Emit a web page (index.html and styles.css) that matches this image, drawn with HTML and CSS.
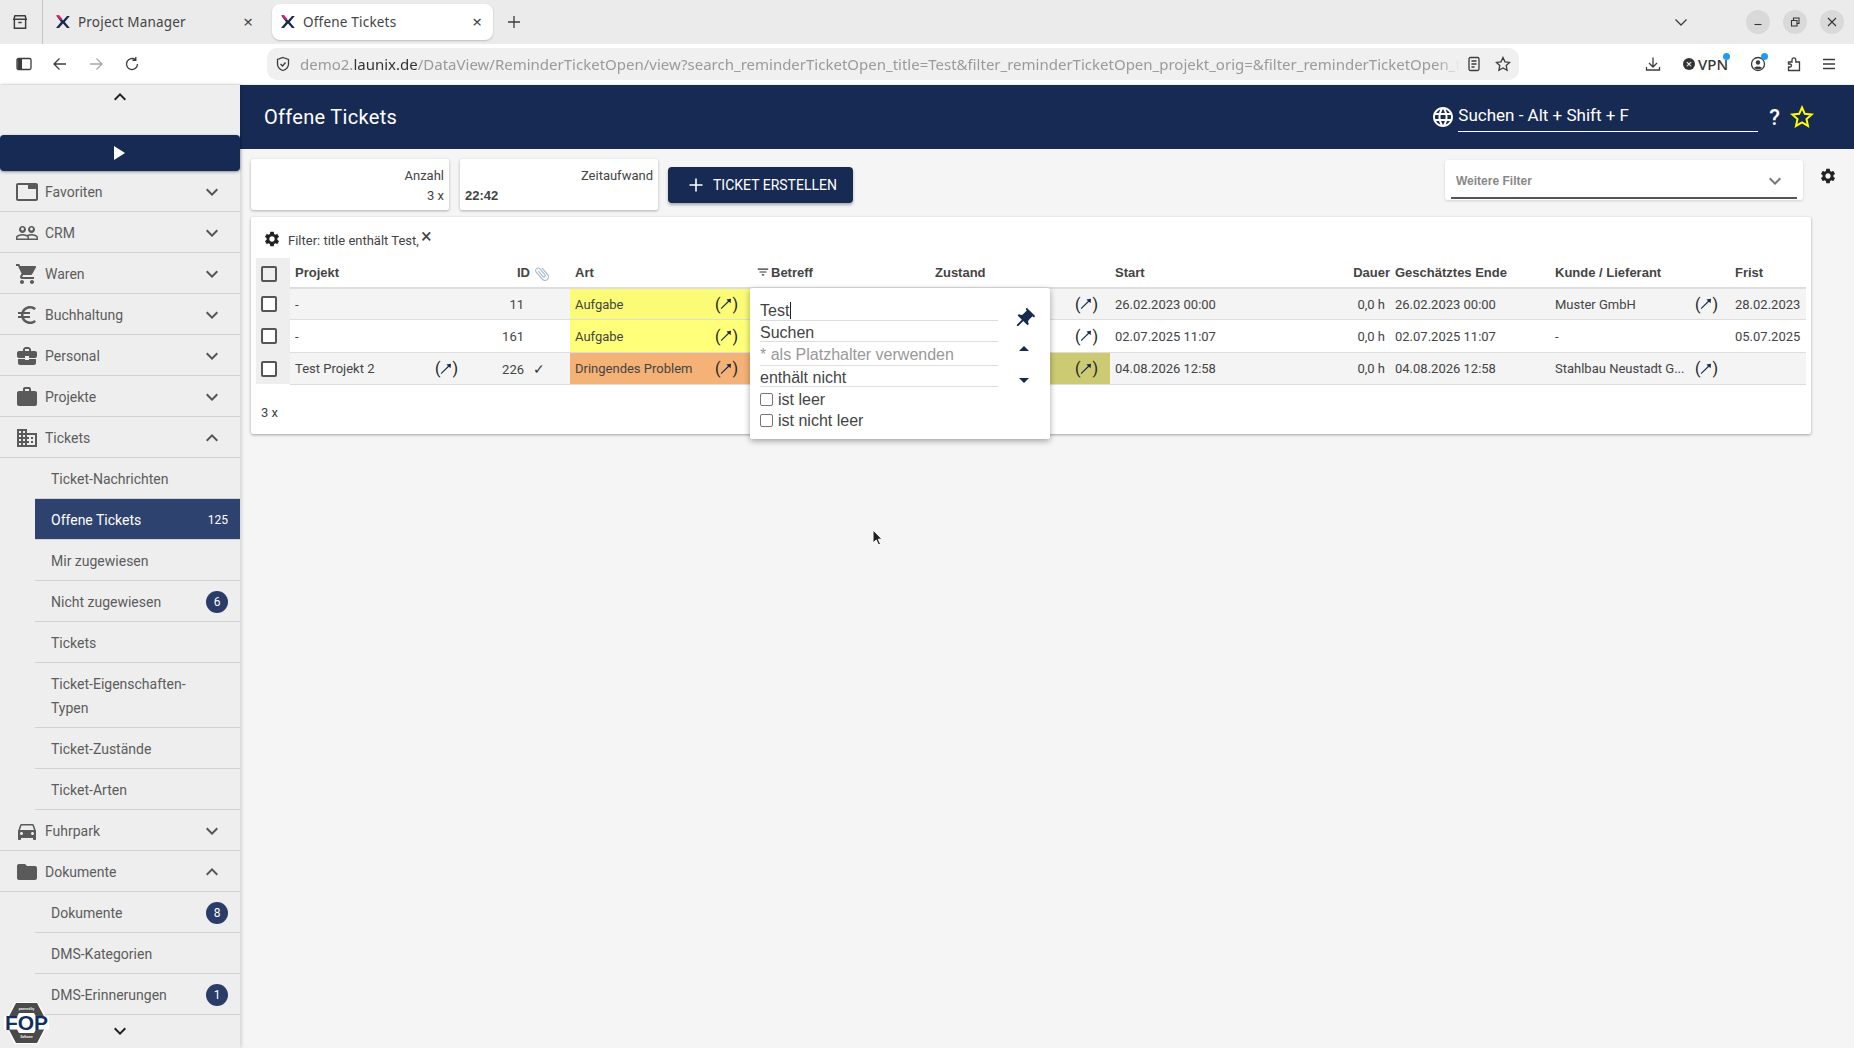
FILE: index.html
```html
<!DOCTYPE html>
<html lang="de">
  <head>
    <meta charset="UTF-8" />
    <title>Offene Tickets</title>
    <link rel="stylesheet" href="styles.css">
  </head>
  <body>
    <svg class="sprite" xmlns="http://www.w3.org/2000/svg">
      <symbol id="i-down" viewBox="0 0 24 24"><path d="M16.59 8.59L12 13.17 7.41 8.59 6 10l6 6 6-6z"/></symbol>
      <symbol id="i-up" viewBox="0 0 24 24"><path d="M12 8l-6 6 1.41 1.41L12 10.83l4.59 4.58L18 14z"/></symbol>
      <symbol id="i-tab" viewBox="0 0 24 24"><path d="M21 3H3c-1.1 0-2 .9-2 2v14c0 1.1.9 2 2 2h18c1.1 0 2-.9 2-2V5c0-1.1-.9-2-2-2zm0 16H3V5h10v4h8v10z"/></symbol>
      <symbol id="i-people" viewBox="0 0 24 24"><path d="M16.5 13c-1.2 0-3.07.34-4.5 1-1.43-.67-3.3-1-4.5-1C5.33 13 1 14.08 1 16.25V19h22v-2.75c0-2.17-4.33-3.25-6.5-3.25zm-4 4.5h-10v-1.25c0-.54 2.56-1.75 5-1.75s5 1.21 5 1.75v1.25zm9 0H14v-1.25c0-.46-.2-.86-.52-1.22.88-.3 1.96-.53 3.02-.53 2.44 0 5 1.21 5 1.75v1.25zM7.5 12c1.93 0 3.5-1.57 3.5-3.5S9.43 5 7.5 5 4 6.57 4 8.5 5.57 12 7.5 12zm0-5.5c.83 0 1.5.67 1.5 1.5s-.67 1.5-1.5 1.5S6 8.83 6 8s.67-1.5 1.5-1.5zm9 5.5c1.93 0 3.5-1.57 3.5-3.5S18.43 5 16.5 5 13 6.57 13 8.5s1.57 3.5 3.5 3.5zm0-5.5c.83 0 1.5.67 1.5 1.5s-.67 1.5-1.5 1.5S15 8.83 15 8s.67-1.5 1.5-1.5z"/></symbol>
      <symbol id="i-cart" viewBox="0 0 24 24"><path d="M7 18c-1.1 0-1.99.9-1.99 2S5.9 22 7 22s2-.9 2-2-.9-2-2-2zM1 2v2h2l3.6 7.59-1.35 2.45c-.16.28-.25.61-.25.96 0 1.1.9 2 2 2h12v-2H7.42c-.14 0-.25-.11-.25-.25l.03-.12.9-1.63h7.45c.75 0 1.41-.41 1.75-1.03l3.58-6.49c.08-.14.12-.31.12-.48 0-.55-.45-1-1-1H5.21l-.94-2H1zm16 16c-1.1 0-1.99.9-1.99 2s.89 2 1.99 2 2-.9 2-2-.9-2-2-2z"/></symbol>
      <symbol id="i-euro" viewBox="0 0 24 24"><path d="M15 18.5c-2.51 0-4.68-1.42-5.76-3.5H15v-2H8.58c-.05-.33-.08-.66-.08-1s.03-.67.08-1H15V9H9.24C10.32 6.92 12.5 5.5 15 5.5c1.61 0 3.09.59 4.23 1.57L21 5.3C19.41 3.87 17.3 3 15 3c-3.92 0-7.24 2.51-8.48 6H3v2h3.06c-.04.33-.06.66-.06 1s.02.67.06 1H3v2h3.52c1.24 3.49 4.56 6 8.48 6 2.31 0 4.41-.87 6-2.3l-1.78-1.77c-1.13.98-2.6 1.57-4.22 1.57z"/></symbol>
      <symbol id="i-center" viewBox="0 0 24 24"><path d="M10 16v-1H3.01L3 19c0 1.11.89 2 2 2h14c1.11 0 2-.89 2-2v-4h-7v1h-4zm10-9h-4.01V5l-2-2h-4l-2 2v2H4c-1.1 0-2 .9-2 2v3c0 1.11.89 2 2 2h6v-2h4v2h6c1.1 0 2-.9 2-2V9c0-1.1-.9-2-2-2zm-6 0h-4V5h4v2z"/></symbol>
      <symbol id="i-work" viewBox="0 0 24 24"><path d="M20 6h-4V4c0-1.11-.89-2-2-2h-4c-1.11 0-2 .89-2 2v2H4c-1.11 0-1.99.89-1.99 2L2 19c0 1.11.89 2 2 2h16c1.11 0 2-.89 2-2V8c0-1.11-.89-2-2-2zm-6 0h-4V4h4v2z"/></symbol>
      <symbol id="i-domain" viewBox="0 0 24 24"><path d="M12 7V3H2v18h20V7H12zM6 19H4v-2h2v2zm0-4H4v-2h2v2zm0-4H4V9h2v2zm0-4H4V5h2v2zm4 12H8v-2h2v2zm0-4H8v-2h2v2zm0-4H8V9h2v2zm0-4H8V5h2v2zm10 12h-8v-2h2v-2h-2v-2h2v-2h-2V9h8v10zm-2-8h-2v2h2v-2zm0 4h-2v2h2v-2z"/></symbol>
      <symbol id="i-car" viewBox="0 0 24 24"><path d="M18.92 6.01C18.72 5.42 18.16 5 17.5 5h-11c-.66 0-1.21.42-1.42 1.01L3 12v8c0 .55.45 1 1 1h1c.55 0 1-.45 1-1v-1h12v1c0 .55.45 1 1 1h1c.55 0 1-.45 1-1v-8l-2.08-5.99zM6.5 16c-.83 0-1.5-.67-1.5-1.5S5.67 13 6.5 13s1.5.67 1.5 1.5S7.33 16 6.5 16zm11 0c-.83 0-1.5-.67-1.5-1.5s.67-1.5 1.5-1.5 1.5.67 1.5 1.5-.67 1.5-1.5 1.5zM5 11l1.5-4.5h11L19 11H5z"/></symbol>
      <symbol id="i-folder" viewBox="0 0 24 24"><path d="M10 4H4c-1.1 0-1.99.9-1.99 2L2 18c0 1.1.9 2 2 2h16c1.1 0 2-.9 2-2V8c0-1.1-.9-2-2-2h-8l-2-2z"/></symbol>
      <symbol id="i-gear" viewBox="0 0 24 24"><path d="M19.14 12.94c.04-.3.06-.61.06-.94 0-.32-.02-.64-.07-.94l2.03-1.58c.18-.14.23-.41.12-.61l-1.92-3.32c-.12-.22-.37-.29-.59-.22l-2.39.96c-.5-.38-1.03-.7-1.62-.94l-.36-2.54c-.04-.24-.24-.41-.48-.41h-3.84c-.24 0-.43.17-.47.41l-.36 2.54c-.59.24-1.13.57-1.62.94l-2.39-.96c-.22-.08-.47 0-.59.22L2.74 8.87c-.12.21-.08.47.12.61l2.03 1.58c-.05.3-.09.63-.09.94s.02.64.07.94l-2.03 1.58c-.18.14-.23.41-.12.61l1.92 3.32c.12.22.37.29.59.22l2.39-.96c.5.38 1.03.7 1.62.94l.36 2.54c.05.24.24.41.48.41h3.84c.24 0 .44-.17.47-.41l.36-2.54c.59-.24 1.13-.56 1.62-.94l2.39.96c.22.08.47 0 .59-.22l1.92-3.32c.12-.22.07-.47-.12-.61l-2.01-1.58zM12 15.6c-1.98 0-3.6-1.62-3.6-3.6s1.62-3.6 3.6-3.6 3.6 1.62 3.6 3.6-1.62 3.6-3.6 3.6z"/></symbol>
      <symbol id="i-globe" viewBox="0 0 24 24"><path d="M11.99 2C6.47 2 2 6.48 2 12s4.47 10 9.99 10C17.52 22 22 17.52 22 12S17.52 2 11.99 2zm6.93 6h-2.95c-.32-1.25-.78-2.45-1.38-3.56 1.84.63 3.37 1.91 4.33 3.56zM12 4.04c.83 1.2 1.48 2.53 1.91 3.96h-3.82c.43-1.43 1.08-2.76 1.91-3.96zM4.26 14C4.1 13.36 4 12.69 4 12s.1-1.36.26-2h3.38c-.08.66-.14 1.32-.14 2 0 .68.06 1.34.14 2H4.26zm.82 2h2.95c.32 1.25.78 2.45 1.38 3.56-1.84-.63-3.37-1.9-4.33-3.56zm2.95-8H5.08c.96-1.66 2.49-2.93 4.33-3.56C8.81 5.55 8.35 6.75 8.03 8zM12 19.96c-.83-1.2-1.48-2.53-1.91-3.96h3.82c-.43 1.43-1.08 2.76-1.91 3.96zM14.34 14H9.66c-.09-.66-.16-1.32-.16-2 0-.68.07-1.35.16-2h4.68c.09.65.16 1.32.16 2 0 .68-.07 1.34-.16 2zm.25 5.56c.6-1.11 1.06-2.31 1.38-3.56h2.95c-.96 1.65-2.49 2.93-4.33 3.56zM16.36 14c.08-.66.14-1.32.14-2 0-.68-.06-1.34-.14-2h3.38c.16.64.26 1.31.26 2s-.1 1.36-.26 2h-3.38z"/></symbol>
      <symbol id="i-pin" viewBox="0 0 24 24"><path transform="rotate(45 12 12)" d="M16 9V4h1c.55 0 1-.45 1-1s-.45-1-1-1H7c-.55 0-1 .45-1 1s.45 1 1 1h1v5c0 1.66-1.34 3-3 3v2h5.97v7l1 1 1-1v-7H19v-2c-1.66 0-3-1.34-3-3z"/></symbol>
      <symbol id="i-clip" viewBox="0 0 24 24"><path transform="rotate(-40 12 12)" d="M16.5 6v11.5c0 2.21-1.79 4-4 4s-4-1.79-4-4V5c0-1.38 1.12-2.5 2.5-2.5s2.5 1.12 2.5 2.5v10.5c0 .55-.45 1-1 1s-1-.45-1-1V6H10v9.5c0 1.38 1.12 2.5 2.5 2.5s2.5-1.12 2.5-2.5V5c0-2.21-1.79-4-4-4S7 2.79 7 5v12.5c0 3.04 2.46 5.5 5.5 5.5s5.5-2.46 5.5-5.5V6h-1.5z"/></symbol>
      <symbol id="i-filter" viewBox="0 0 24 24"><path d="M10 18h4v-2h-4v2zM3 6v2h18V6H3zm3 7h12v-2H6v2z"/></symbol>
      <symbol id="i-arrow" viewBox="0 0 12 12"><path d="M1.400 11l-.7-.7 7.300-7.300-1.600-1.600L11 .7l-.4 4.600-1.600-1.600z"/></symbol>
      <symbol id="i-fav" viewBox="0 0 16 16"><path fill="#16294f" d="M1 14L6 8 1.500 2h2.800L8 6.500 12 2h2.800L9.800 8l5 6H12L8 9.500 4 14z"/><path fill="#e0246f" d="M1 1h3l3.500 4-1.500 1.500z"/></symbol>
    </svg>

    <div class="tabbar">
      <div class="tab-list-btn">
        <svg class="b-icon" viewBox="0 0 16 16"><path d="M2 5.500h12M3 5.500v8h10v-8M3.500 2.500h9l1 3h-11zM6.500 8.500h3"/></svg>
      </div>
      <div class="tab">
        <svg class="favicon"><use href="#i-fav"/></svg>
        <span class="tab-title">Project Manager</span>
        <span class="tab-close">×</span>
      </div>
      <div class="tab tab-active">
        <svg class="favicon"><use href="#i-fav"/></svg>
        <span class="tab-title">Offene Tickets</span>
        <span class="tab-close">×</span>
      </div>
      <svg class="b-icon tab-new" viewBox="0 0 16 16"><path d="M8 2v12M2 8h12"/></svg>
      <svg class="b-icon tab-more" viewBox="0 0 16 16"><path d="M2.500 5.500L8 11l5.500-5.500"/></svg>
      <div class="win-btn"><svg viewBox="0 0 12 12"><path d="M2.500 8.500h7"/></svg></div>
      <div class="win-btn"><svg viewBox="0 0 12 12"><path d="M2.500 4.500h5.500v5.500h-5.500zM4.500 4.500v-2.500h5.500v5.500h-2"/></svg></div>
      <div class="win-btn win-last"><svg viewBox="0 0 12 12"><path d="M2 2l8 8M10 2l-8 8"/></svg></div>
    </div>

    <div class="toolbar">
      <svg class="b-icon" viewBox="0 0 16 16"><rect x="1" y="2.500" width="14" height="11" rx="1.500"/><rect class="fill" x="1.500" y="3" width="4.500" height="10"/></svg>
      <svg class="b-icon" viewBox="0 0 16 16"><path d="M14 8H2M7.500 2.500L2 8l5.500 5.500"/></svg>
      <svg class="b-icon off" viewBox="0 0 16 16"><path d="M2 8h12M8.500 2.500L14 8l-5.500 5.500"/></svg>
      <svg class="b-icon" viewBox="0 0 16 16"><path d="M13.500 8A5.500 5.500 0 1 1 11.500 3.800M11.800 1v3.300h-3.300"/></svg>
      <div class="urlbar">
        <svg class="b-icon url-shield" viewBox="0 0 16 16"><path d="M8 1.500l5.500 2v4.500c0 3.500-2.500 5.500-5.500 6.500-3-1-5.500-3-5.500-6.500V3.500zM5.500 8l2 2 3-3.500"/></svg>
        <div class="url-text">demo2.<b>launix.de</b>/DataView/ReminderTicketOpen/view?search_reminderTicketOpen_title=Test&amp;filter_reminderTicketOpen_projekt_orig=&amp;filter_reminderTicketOpen_t</div>
        <svg class="b-icon" viewBox="0 0 16 16"><rect x="3" y="1.500" width="10" height="13" rx="1.500"/><path d="M5.500 5h5M5.500 8h5M5.500 11h3"/></svg>
        <svg class="b-icon url-star" viewBox="0 0 16 16"><path d="M8 1.500l2 4.300 4.600.6-3.400 3.200.9 4.700L8 11.900l-4.100 2.400.9-4.700-3.400-3.200 4.600-.6z"/></svg>
      </div>
      <svg class="b-icon tb-down" viewBox="0 0 16 16"><path d="M8 1.500v9M4 7l4 4 4-4M1.500 11v3h13v-3"/></svg>
      <div class="vpn"><span class="vpn-dot">×</span>VPN<i class="blue-dot"></i></div>
      <div class="tb-account">
        <svg class="b-icon" viewBox="0 0 16 16"><circle cx="8" cy="8" r="6.500"/><circle class="fill" cx="8" cy="6.500" r="2.200"/><path class="fill" d="M4 12c1-2 7-2 8 0-2 1.800-6 1.800-8 0z"/></svg>
        <i class="blue-dot"></i>
      </div>
      <svg class="b-icon tb-ext" viewBox="0 0 16 16"><path d="M2.500 6h3.500V3.800a1.900 1.900 0 0 1 3.800 0V6h3.700v8.500h-11V11h1.500a1.500 1.500 0 0 0 0-3H2.500z"/></svg>
      <svg class="b-icon tb-menu" viewBox="0 0 16 16"><path d="M2 3.500h12M2 8h12M2 12.500h12"/></svg>
    </div>

    <div class="app">
      <aside class="sidebar">
        <div class="scroll-up"><svg class="ic-24"><use href="#i-up"/></svg></div>
        <div class="toggle"><span class="play"></span></div>
        <nav class="menu">
          <div class="nav-item"><svg class="nav-icon"><use href="#i-tab"/></svg>Favoriten<svg class="nav-chev"><use href="#i-down"/></svg></div>
          <div class="nav-item"><svg class="nav-icon"><use href="#i-people"/></svg>CRM<svg class="nav-chev"><use href="#i-down"/></svg></div>
          <div class="nav-item"><svg class="nav-icon"><use href="#i-cart"/></svg>Waren<svg class="nav-chev"><use href="#i-down"/></svg></div>
          <div class="nav-item"><svg class="nav-icon"><use href="#i-euro"/></svg>Buchhaltung<svg class="nav-chev"><use href="#i-down"/></svg></div>
          <div class="nav-item"><svg class="nav-icon"><use href="#i-center"/></svg>Personal<svg class="nav-chev"><use href="#i-down"/></svg></div>
          <div class="nav-item"><svg class="nav-icon"><use href="#i-work"/></svg>Projekte<svg class="nav-chev"><use href="#i-down"/></svg></div>
          <div class="nav-item"><svg class="nav-icon"><use href="#i-domain"/></svg>Tickets<svg class="nav-chev"><use href="#i-up"/></svg></div>
          <div class="sub-item">Ticket-Nachrichten</div>
          <div class="sub-item sub-active">Offene Tickets<span class="count">125</span></div>
          <div class="sub-item">Mir zugewiesen</div>
          <div class="sub-item">Nicht zugewiesen<span class="badge">6</span></div>
          <div class="sub-item">Tickets</div>
          <div class="sub-item sub-two">Ticket-Eigenschaften-Typen</div>
          <div class="sub-item">Ticket-Zustände</div>
          <div class="sub-item">Ticket-Arten</div>
          <div class="nav-item"><svg class="nav-icon"><use href="#i-car"/></svg>Fuhrpark<svg class="nav-chev"><use href="#i-down"/></svg></div>
          <div class="nav-item"><svg class="nav-icon"><use href="#i-folder"/></svg>Dokumente<svg class="nav-chev"><use href="#i-up"/></svg></div>
          <div class="sub-item">Dokumente<span class="badge">8</span></div>
          <div class="sub-item">DMS-Kategorien</div>
          <div class="sub-item">DMS-Erinnerungen<span class="badge">1</span></div>
        </nav>
        <div class="scroll-down"><svg class="ic-24"><use href="#i-down"/></svg></div>
        <div class="fop">
          <svg viewBox="0 0 45 42">
            <path d="M11 0h23l11 21-11 21H11L0 21z" fill="#fff"/>
            <path fill-rule="evenodd" d="M12 1h21l10.500 20L33 41H12L1.500 21zM15 11l-5.500 10L15 31h15l5.500-10L30 11z" fill="#4a4a4a"/>
            <path d="M0 14.500h45v13H0z" fill="#fff"/>
          </svg>
          <span class="fop-top">powered by</span>
          <span class="fop-name">FOP</span>
          <span class="fop-bot">Software</span>
        </div>
      </aside>

      <main class="content">
        <header class="page-head">
          <h1>Offene Tickets</h1>
          <div class="head-search">
            <svg class="globe"><use href="#i-globe"/></svg>
            <div class="search-field">Suchen - Alt + Shift + F</div>
            <span class="help">?</span>
            <svg class="head-star" viewBox="0 0 24 24"><path d="M12 2.500l2.800 6.300 6.900.7-5.200 4.600 1.500 6.800-6-3.500-6 3.500 1.500-6.800-5.200-4.600 6.900-.7z"/></svg>
          </div>
        </header>

        <div class="stats-row">
          <div class="stat">
            <div class="stat-label">Anzahl</div>
            <div class="stat-value">3 x</div>
          </div>
          <div class="stat">
            <div class="stat-label">Zeitaufwand</div>
            <div class="stat-value stat-time">22:42</div>
          </div>
          <button class="btn-create"><svg viewBox="0 0 16 16"><path d="M8 1.500v13M1.500 8h13"/></svg>Ticket erstellen</button>
          <div class="more-filter">
            <span>Weitere Filter</span>
            <svg class="ic-24"><use href="#i-down"/></svg>
          </div>
          <svg class="row-gear"><use href="#i-gear"/></svg>
        </div>

        <section class="table-card">
          <div class="filter-line">
            <svg class="filter-gear"><use href="#i-gear"/></svg>
            <span>Filter: title enthält Test,</span>
            <span class="filter-x">×</span>
          </div>
          <table class="tickets">
            <colgroup>
              <col class="c-check"><col class="c-projekt"><col class="c-id"><col class="c-mid"><col class="c-mid"><col class="c-mid"><col class="c-start"><col class="c-dauer"><col class="c-ende"><col class="c-mid"><col class="c-frist">
            </colgroup>
            <thead>
              <tr>
                <th class="check-cell"><span class="box"></span></th>
                <th>Projekt</th>
                <th class="right id-head">ID<svg class="clip"><use href="#i-clip"/></svg></th>
                <th>Art</th>
                <th class="betreff-head"><svg class="filter-ic"><use href="#i-filter"/></svg>Betreff</th>
                <th>Zustand</th>
                <th>Start</th>
                <th class="right dauer-head">Dauer</th>
                <th>Geschätztes Ende</th>
                <th>Kunde / Lieferant</th>
                <th>Frist</th>
              </tr>
            </thead>
            <tbody>
              <tr>
                <td class="check-cell"><span class="box"></span></td>
                <td>-</td>
                <td class="right num">11<span class="done"></span></td>
                <td class="art-yellow-dim"><div class="cell-link">Aufgabe<span class="link">(<svg><use href="#i-arrow"/></svg>)</span></div></td>
                <td></td>
                <td><div class="cell-link"><span></span><span class="link">(<svg><use href="#i-arrow"/></svg>)</span></div></td>
                <td>26.02.2023 00:00</td>
                <td class="right">0,0 h</td>
                <td>26.02.2023 00:00</td>
                <td><div class="cell-link">Muster GmbH<span class="link">(<svg><use href="#i-arrow"/></svg>)</span></div></td>
                <td>28.02.2023</td>
              </tr>
              <tr>
                <td class="check-cell"><span class="box"></span></td>
                <td>-</td>
                <td class="right num">161<span class="done"></span></td>
                <td class="art-yellow"><div class="cell-link">Aufgabe<span class="link">(<svg><use href="#i-arrow"/></svg>)</span></div></td>
                <td></td>
                <td><div class="cell-link"><span></span><span class="link">(<svg><use href="#i-arrow"/></svg>)</span></div></td>
                <td>02.07.2025 11:07</td>
                <td class="right">0,0 h</td>
                <td>02.07.2025 11:07</td>
                <td>-</td>
                <td>05.07.2025</td>
              </tr>
              <tr>
                <td class="check-cell"><span class="box"></span></td>
                <td><div class="cell-link">Test Projekt 2<span class="link">(<svg><use href="#i-arrow"/></svg>)</span></div></td>
                <td class="right num">226<span class="done">✓</span></td>
                <td class="art-orange"><div class="cell-link">Dringendes Problem<span class="link">(<svg><use href="#i-arrow"/></svg>)</span></div></td>
                <td></td>
                <td class="state-olive"><div class="cell-link"><span></span><span class="link">(<svg><use href="#i-arrow"/></svg>)</span></div></td>
                <td>04.08.2026 12:58</td>
                <td class="right">0,0 h</td>
                <td>04.08.2026 12:58</td>
                <td><div class="cell-link"><span class="cut">Stahlbau Neustadt G...</span><span class="link">(<svg><use href="#i-arrow"/></svg>)</span></div></td>
                <td></td>
              </tr>
            </tbody>
          </table>
          <div class="table-foot">3 x</div>

          <div class="col-popup">
            <div class="pop-fields">
              <div class="pop-row pop-first"><span class="caret">Test</span></div>
              <div class="pop-row">Suchen</div>
              <div class="pop-row pop-hint">* als Platzhalter verwenden</div>
              <div class="pop-row">enthält nicht</div>
              <label class="pop-check"><span class="mini-box"></span>ist leer</label>
              <label class="pop-check"><span class="mini-box"></span>ist nicht leer</label>
            </div>
            <div class="pop-tools">
              <svg class="pin"><use href="#i-pin"/></svg>
              <span class="tri tri-up"></span>
              <span class="tri tri-down"></span>
            </div>
          </div>
        </section>
      </main>
    </div>

    <svg class="mouse" viewBox="0 0 12 18"><path d="M1 1v13l3.200-3 2.300 5 2-1-2.200-4.800H10z" fill="#222" stroke="#fff"/></svg>
  </body>
</html>
```

FILE: styles.css
```css
* {
  box-sizing: border-box;
}
html,
body {
  height: 100%;
}
body {
  margin: 0;
  overflow: hidden;
  display: flex;
  flex-direction: column;
  font-family: Roboto, "Liberation Sans", sans-serif;
  color: #444;
  background: #f5f5f5;
}
.sprite {
  display: none;
}

/* browser chrome */
.tabbar {
  height: 44px;
  flex: none;
  display: flex;
  align-items: center;
  background: #ebebeb;
  font-family: "Noto Sans", sans-serif;
  font-size: 13.5px;
  color: #444;
}
.b-icon {
  width: 16px;
  height: 16px;
  flex: none;
  fill: none;
  stroke: #3c3c3c;
  stroke-width: 1.3;
}
.b-icon .fill {
  fill: #3c3c3c;
  stroke: none;
}
.b-icon.off {
  stroke: #a8a8a8;
}
.tab-list-btn {
  width: 43px;
  height: 44px;
  padding-left: 11px;
  display: flex;
  align-items: center;
  border-right: 1px solid #c4c4c4;
}
.tab-list-btn .b-icon {
  width: 18px;
  height: 18px;
}
.tab {
  width: 221px;
  height: 36px;
  padding: 0 8px 0 12px;
  display: flex;
  align-items: center;
  border-radius: 8px;
}
.tab-active {
  background: #fff;
  margin-left: 8px;
  box-shadow: 0 1px 2px rgba(0, 0, 0, 0.2);
  padding-left: 8px;
}
.favicon {
  width: 16px;
  height: 16px;
  margin-right: 7px;
}
.tab-title {
  flex: 1;
  letter-spacing: 0.2px;
}
.tab-close {
  width: 16px;
  text-align: center;
  font-size: 17px;
  line-height: 16px;
}
.tab-new {
  margin-left: 13px;
}
.tab-more {
  margin-left: auto;
  margin-right: 57px;
}
.win-btn {
  width: 24px;
  height: 24px;
  margin-right: 13px;
  border-radius: 50%;
  background: #d9d9d9;
  display: flex;
  align-items: center;
  justify-content: center;
}
.win-last {
  margin-right: 10px;
}
.win-btn svg {
  width: 12px;
  height: 12px;
  fill: none;
  stroke: #333;
  stroke-width: 1.1;
}
.toolbar {
  height: 41px;
  flex: none;
  padding: 0 0 1px 16px;
  display: flex;
  align-items: center;
  background: #fff;
  border-bottom: 1px solid #eee;
}
.toolbar > .b-icon {
  margin-right: 20px;
}
.urlbar {
  width: 1252px;
  height: 32px;
  margin-left: 107px;
  padding: 0 5px 0 8px;
  display: flex;
  align-items: center;
  background: #f0f0f0;
  border-radius: 10px;
}
.url-shield {
  margin-right: 9px;
}
.url-text {
  width: 1160px;
  overflow: hidden;
  white-space: nowrap;
  margin-right: 6px;
  font-family: "Noto Sans", sans-serif;
  font-size: 15px;
  color: #9a9a9a;
  -webkit-mask-image: linear-gradient(to right, #000 98%, transparent);
  mask-image: linear-gradient(to right, #000 98%, transparent);
}
.url-text b {
  font-weight: 400;
  color: #333;
}
.url-star {
  margin-left: 13px;
}
.toolbar > .tb-down {
  margin-left: 126px;
  margin-right: 22px;
}
.vpn {
  position: relative;
  width: 48px;
  display: flex;
  align-items: center;
  font-family: "Noto Sans", sans-serif;
  font-size: 15px;
  font-weight: 500;
  color: #333;
}
.vpn-dot {
  width: 12px;
  height: 12px;
  margin-right: 3px;
  border-radius: 50%;
  background: #333;
  color: #fff;
  font-size: 11px;
  line-height: 12px;
  text-align: center;
}
.blue-dot {
  position: absolute;
  top: -1px;
  right: 1px;
  width: 7px;
  height: 7px;
  border-radius: 50%;
  background: #1e9df0;
}
.tb-account {
  position: relative;
  display: flex;
  margin-left: 19px;
  margin-right: 20px;
}
.tb-account .blue-dot {
  top: -3px;
  right: -2px;
}
.toolbar > .tb-ext {
  margin-right: 19px;
}
.toolbar > .tb-menu {
  margin-right: 0;
}

/* app shell */
.app {
  flex: 1;
  min-height: 0;
  display: flex;
}
.sidebar {
  position: relative;
  width: 240px;
  flex: none;
  display: flex;
  flex-direction: column;
  background: #eee;
  box-shadow: 1px 0 4px rgba(0, 0, 0, 0.18);
  z-index: 2;
}
.ic-24 {
  width: 24px;
  height: 24px;
  fill: #444;
}
.scroll-up {
  height: 50px;
  flex: none;
  text-align: center;
}
.scroll-up svg,
.scroll-down svg {
  fill: #222;
}
.toggle {
  height: 36px;
  flex: none;
  display: flex;
  align-items: center;
  justify-content: center;
  background: #172a54;
  border-radius: 4px;
  box-shadow: 0 1px 3px rgba(0, 0, 0, 0.4);
}
.play {
  border-left: 11px solid #fff;
  border-top: 7px solid transparent;
  border-bottom: 7px solid transparent;
  margin-left: -2px;
}
.menu {
  flex: 1;
  min-height: 0;
  overflow: hidden;
  font-size: 14px;
  color: #5c5c5c;
}
.nav-item {
  height: 41px;
  padding: 1px 16px 0 15px;
  display: flex;
  align-items: center;
  border-bottom: 1px solid #d2d2d2;
}
.nav-icon {
  width: 24px;
  height: 24px;
  margin-right: 6px;
  fill: #5a5a5a;
}
.nav-chev {
  width: 24px;
  height: 24px;
  margin-left: auto;
  fill: #555;
}
.sub-item {
  min-height: 41px;
  margin-left: 35px;
  padding: 1px 12px 0 16px;
  display: flex;
  align-items: center;
  justify-content: space-between;
  border-bottom: 1px solid #d2d2d2;
  line-height: 24px;
}
.sub-two {
  height: 65px;
  padding-right: 40px;
}
.sub-active {
  background: #2e4270;
  color: #fff;
}
.count {
  font-size: 12px;
}
.badge {
  width: 22px;
  height: 22px;
  border-radius: 50%;
  background: #2a3c68;
  color: #fff;
  font-size: 12px;
  line-height: 22px;
  text-align: center;
}
.scroll-down {
  height: 33px;
  flex: none;
  padding-top: 4px;
  text-align: center;
}
.fop {
  position: absolute;
  left: 4px;
  bottom: 4px;
  width: 45px;
  height: 42px;
  text-align: center;
  color: #12305f;
}
.fop svg {
  position: absolute;
  left: 0;
  top: 0;
  width: 45px;
  height: 42px;
}
.fop span {
  position: absolute;
  left: 0;
  width: 100%;
}
.fop-top,
.fop-bot {
  font-size: 3px;
  line-height: 4px;
  color: #eee;
  font-weight: 700;
}
.fop-top {
  top: 5px;
}
.fop-bot {
  top: 33px;
}
.fop-name {
  top: 10px;
  font-family: "Liberation Sans", sans-serif;
  font-size: 21px;
  font-weight: 700;
  line-height: 22px;
}

/* page */
.content {
  flex: 1;
  min-width: 0;
  display: flex;
  flex-direction: column;
}
.page-head {
  height: 64px;
  flex: none;
  padding: 0 40px 0 24px;
  display: flex;
  align-items: center;
  justify-content: space-between;
  background: #172a54;
  color: #fff;
}
.page-head h1 {
  margin: 0;
  font-size: 20px;
  font-weight: 400;
  letter-spacing: 0.3px;
}
.head-search {
  display: flex;
  align-items: center;
}
.globe {
  width: 24px;
  height: 24px;
  margin-right: 3px;
  fill: #fff;
}
.search-field {
  width: 300px;
  height: 30px;
  padding-top: 2px;
  font-size: 17px;
  line-height: 22px;
  border-bottom: 1px solid #fff;
}
.help {
  margin-left: 11px;
  font-size: 22px;
  font-weight: 500;
}
.head-star {
  width: 24px;
  height: 24px;
  margin-left: 10px;
  fill: none;
  stroke: #ffff00;
  stroke-width: 2;
}
.stats-row {
  height: 68px;
  flex: none;
  padding: 10px 17px 0 11px;
  display: flex;
  align-items: flex-start;
}
.stat {
  width: 198px;
  height: 51px;
  margin-right: 11px;
  padding: 7px 5px;
  background: #fff;
  border-radius: 2px;
  box-shadow: 0 1px 3px rgba(0, 0, 0, 0.3);
  font-size: 13px;
  line-height: 20px;
  text-align: right;
}
.stat-time {
  text-align: left;
  font-family: "Liberation Sans", sans-serif;
  font-weight: 700;
}
.btn-create {
  width: 185px;
  height: 36px;
  margin: 8px 0 0 -1px;
  padding: 0 0 0 20px;
  display: flex;
  align-items: center;
  background: #172a54;
  border: none;
  border-radius: 4px;
  box-shadow: 0 2px 3px rgba(0, 0, 0, 0.3);
  color: #fff;
  font-family: inherit;
  font-size: 14px;
  text-transform: uppercase;
}
.btn-create svg {
  width: 16px;
  height: 16px;
  margin-right: 9px;
  fill: none;
  stroke: #fff;
  stroke-width: 1.6;
}
.more-filter {
  width: 358px;
  height: 40px;
  margin-left: auto;
  margin-top: 1px;
  padding: 2px 16px 0 11px;
  display: flex;
  align-items: center;
  justify-content: space-between;
  background: #fff;
  border-radius: 3px;
  box-shadow: 0 1px 3px rgba(0, 0, 0, 0.15);
  font-family: "Liberation Sans", sans-serif;
  font-size: 12px;
  font-weight: 700;
  color: #888;
  position: relative;
}
.more-filter::after {
  content: "";
  position: absolute;
  left: 6px;
  right: 6px;
  bottom: 1px;
  height: 2px;
  background: #555;
}
.more-filter svg {
  fill: #777;
}
.row-gear {
  width: 18px;
  height: 18px;
  margin: 8px 0 0 16px;
  fill: #222;
}
.table-card {
  position: relative;
  height: 217px;
  margin: 0 43px 0 11px;
  padding-left: 5px;
  background: #fff;
  border-radius: 2px;
  box-shadow: 0 1px 3px rgba(0, 0, 0, 0.35);
}
.filter-line {
  height: 41px;
  padding: 13px 0 0 7px;
  display: flex;
  align-items: flex-start;
  font-size: 13px;
  line-height: 21px;
}
.filter-gear {
  width: 18px;
  height: 18px;
  margin-right: 7px;
  fill: #222;
}
.filter-x {
  margin: -4px 0 0 2px;
  font-size: 20px;
  line-height: 20px;
}
.tickets {
  width: 1550px;
  table-layout: fixed;
  border-collapse: collapse;
  font-size: 13px;
}
.c-check { width: 34px; }
.c-projekt { width: 180px; }
.c-id { width: 100px; }
.c-mid { width: 180px; }
.c-start { width: 240px; }
.c-dauer { width: 40px; }
.c-ende { width: 160px; }
.c-frist { width: 76px; }
.tickets th {
  height: 30px;
  padding: 0 0 0 5px;
  text-align: left;
  font-family: "Liberation Sans", sans-serif;
  font-weight: 700;
  white-space: nowrap;
  border-bottom: 2px solid #ddd;
}
.tickets td {
  padding: 1px 0 0 5px;
  white-space: nowrap;
  border-bottom: 1px solid #ddd;
}
.tickets tbody tr:nth-child(1) { height: 31px; }
.tickets tbody tr:nth-child(2) { height: 33px; }
.tickets tbody tr:nth-child(3) { height: 32px; }
.tickets tbody tr:nth-child(odd) {
  background: #f4f4f4;
}
.tickets .check-cell {
  padding: 1px 0 0 5px;
  background: #eee;
  border-bottom: none;
  text-align: left;
}
.box {
  display: inline-block;
  width: 16px;
  height: 16px;
  vertical-align: middle;
  border: 2px solid #555;
  border-radius: 2px;
  background: #fff;
}
thead .box {
  background: transparent;
}
.tickets .right {
  text-align: right;
  padding-right: 5px;
}
.tickets .dauer-head {
  padding-right: 0;
  padding-left: 0;
}
.tickets .num {
  padding-right: 0;
}
.tickets .id-head {
  padding-right: 19px;
}
.clip {
  width: 18px;
  height: 18px;
  margin: -4px 0 -4px 3px;
  vertical-align: middle;
  fill: #a5bacb;
}
.done {
  display: inline-block;
  width: 46px;
  padding-left: 9px;
  text-align: left;
  font-size: 14px;
  color: #333;
}
.tickets .betreff-head {
  padding-left: 6px;
}
.filter-ic {
  width: 14px;
  height: 14px;
  margin: -4px 1px -4px 0;
  vertical-align: 2px;
  fill: #333;
}
.cell-link {
  padding-right: 12px;
  display: flex;
  align-items: center;
  justify-content: space-between;
}
.link {
  display: flex;
  align-items: center;
  font-size: 16px;
  font-weight: 400;
  color: #222;
}
.link svg {
  width: 12px;
  height: 12px;
  fill: #16294f;
}
.cut {
  width: 134px;
  overflow: hidden;
}
.tickets .art-yellow { background: #ffff7a; }
.tickets .art-yellow-dim { background: #fbfb78; }
.tickets .art-orange { background: #f4b277; }
.tickets .state-olive { background: #ccca72; }
.table-foot {
  padding: 18px 0 0 5px;
  font-size: 13px;
  line-height: 20px;
}

/* column filter popup */
.col-popup {
  position: absolute;
  left: 499px;
  top: 71px;
  width: 300px;
  height: 151px;
  padding-left: 10px;
  display: flex;
  background: #fff;
  border-radius: 2px;
  box-shadow: 0 2px 6px rgba(0, 0, 0, 0.35);
  font-family: "Liberation Sans", sans-serif;
  font-size: 16px;
  line-height: 20px;
}
.pop-fields {
  width: 238px;
}
.pop-row {
  height: 21px;
  line-height: 24px;
  border-bottom: 1px solid #ddd;
}
.pop-first {
  height: 33px;
  padding-top: 11px;
}
.pop-hint {
  height: 24px;
  padding-top: 1px;
  color: #999;
}
.caret {
  padding-right: 1px;
  border-right: 1px solid #222;
}
.pop-check {
  height: 21px;
  display: flex;
  align-items: center;
}
.pop-row + .pop-check {
  margin-top: 2px;
}
.mini-box {
  width: 13px;
  height: 13px;
  margin-right: 5px;
  border: 1px solid #767676;
  border-radius: 2px;
}
.pop-tools {
  width: 52px;
  display: flex;
  flex-direction: column;
  align-items: center;
}
.pin {
  width: 24px;
  height: 24px;
  margin: 19px 0 15px;
  fill: #16294f;
}
.tri {
  width: 0;
  border-left: 5px solid transparent;
  border-right: 5px solid transparent;
}
.tri-up {
  border-bottom: 5px solid #16294f;
  margin-bottom: 27px;
}
.tri-down {
  border-top: 5px solid #16294f;
}

.mouse {
  position: absolute;
  left: 872px;
  top: 529px;
  width: 12px;
  height: 18px;
  z-index: 5;
}
```
